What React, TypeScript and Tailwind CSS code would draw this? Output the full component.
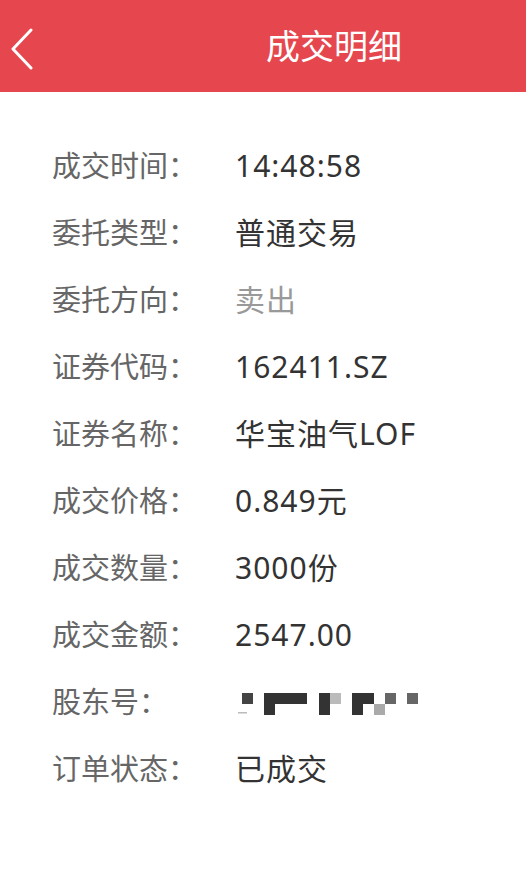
import React from "react";

const rows: { label: string; value: React.ReactNode; muted?: boolean }[] = [
  { label: "成交时间：", value: "14:48:58" },
  { label: "委托类型：", value: "普通交易" },
  { label: "委托方向：", value: "卖出", muted: true },
  { label: "证券代码：", value: "162411.SZ" },
  { label: "证券名称：", value: "华宝油气LOF" },
  { label: "成交价格：", value: "0.849元" },
  { label: "成交数量：", value: "3000份" },
  { label: "成交金额：", value: "2547.00" },
  { label: "股东号：", value: "MASK" },
  { label: "订单状态：", value: "已成交" },
];

function Mosaic() {
  const b: [number, number, number, number, string][] = [
    [7, 11, 11, 11, "#444"],
    [29, 11, 11, 22, "#333"],
    [40, 11, 32, 11, "#333"],
    [84, 11, 11, 22, "#333"],
    [95, 11, 11, 11, "#bbb"],
    [117, 11, 11, 22, "#333"],
    [128, 11, 11, 11, "#333"],
    [139, 22, 11, 11, "#aaa"],
    [150, 11, 11, 11, "#666"],
    [172, 11, 11, 11, "#666"],
  ];
  return (
    <svg width="190" height="40" viewBox="0 0 190 40" className="block">
      {b.map(([x, y, w, h, c], i) => (
        <rect key={i} x={x} y={y} width={w} height={h} fill={c} />
      ))}
      <rect x={3} y={30} width={9} height={1.5} fill="#bbb" />
    </svg>
  );
}

export default function App() {
  return (
    <div
      className="w-[526px] h-[883px] bg-white"
      style={{ fontFamily: '"Noto Sans", "Noto Sans CJK SC", sans-serif' }}
    >
      <div className="h-[92px] bg-[#e6474f] flex items-center relative">
        <svg
          width="24"
          height="42"
          viewBox="0 0 24 42"
          className="absolute left-[10px] top-[28px]"
        >
          <path d="M21 2 L3 21 L21 40" stroke="#fff" strokeWidth="3" fill="none" strokeLinecap="round" strokeLinejoin="round" />
        </svg>
        <div className="pl-[266px] text-white text-[34px] leading-none">
          成交明细
        </div>
      </div>
      <div className="pt-[40px] pl-[52px]">
        {rows.map((r) => (
          <div key={r.label} className="flex items-center h-[67px] leading-none">
            <div className="w-[183px] text-[#666] text-[29px]">{r.label}</div>
            <div className={(r.muted ? "text-[#999]" : "text-[#333]") + " text-[30px] tracking-[1px]"}>
              {r.value === "MASK" ? <Mosaic /> : r.value}
            </div>
          </div>
        ))}
      </div>
    </div>
  );
}
